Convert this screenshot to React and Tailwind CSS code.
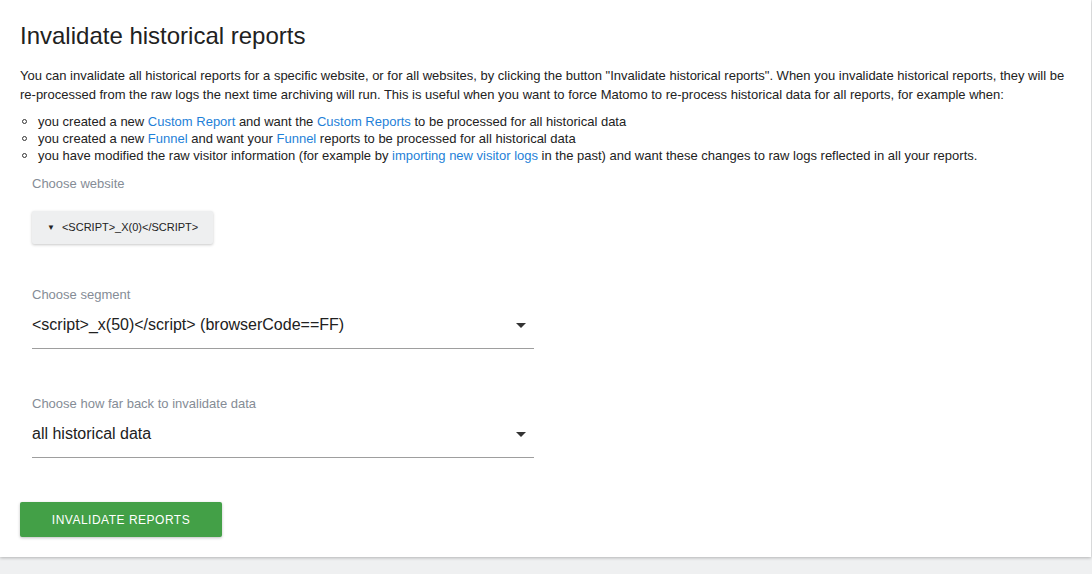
import React from 'react';

const linkCls = 'text-[#1e7fd8]';

function Bullet({ children }) {
  return (
    <li className="flex items-start">
      <span className="mt-[6px] ml-[2px] mr-[11px] h-[5px] w-[5px] shrink-0 rounded-full border border-[#333]"></span>
      <span>{children}</span>
    </li>
  );
}

function Caret() {
  return (
    <svg width="10" height="5" viewBox="0 0 10 5" className="shrink-0">
      <path d="M0 0 L10 0 L5 5 Z" fill="#333" />
    </svg>
  );
}

function FieldSelect({ label, value, labelMt }) {
  return (
    <div className={labelMt}>
      <div className="text-[13px] leading-[17px] text-[#858c96]">{label}</div>
      <div className="mt-[10px] flex w-[502px] items-center justify-between border-b border-[#9e9e9e] pb-[11px] pr-[8px]">
        <span className="text-[16px] leading-[24px] text-[#212121]">{value}</span>
        <Caret />
      </div>
    </div>
  );
}

export default function App() {
  return (
    <div className="min-h-[574px] bg-[#eff0f1] font-['Liberation_Sans',Arial,sans-serif]">
      <div className="mr-px bg-white px-5 pt-5 pb-5 shadow-[0_1px_3px_rgba(0,0,0,0.25)]">
        <h2 className="text-[24px] leading-8 text-[#212121]">Invalidate historical reports</h2>
        <p className="mt-[14px] text-[13px] leading-[19px] text-[#222]">
          You can invalidate all historical reports for a specific website, or for all websites, by clicking the button "Invalidate historical reports". When you invalidate historical reports, they will be re-processed from the raw logs the next time archiving will run. This is useful when you want to force Matomo to re-process historical data for all reports, for example when:
        </p>
        <ul className="mt-[9px] text-[13px] leading-[17px] text-[#222]">
          <Bullet>you created a new <span className={linkCls}>Custom Report</span> and want the <span className={linkCls}>Custom Reports</span> to be processed for all historical data</Bullet>
          <Bullet>you created a new <span className={linkCls}>Funnel</span> and want your <span className={linkCls}>Funnel</span> reports to be processed for all historical data</Bullet>
          <Bullet>you have modified the raw visitor information (for example by <span className={linkCls}>importing new visitor logs</span> in the past) and want these changes to raw logs reflected in all your reports.</Bullet>
        </ul>

        <div className="pl-3">
          <div className="mt-[11px] text-[13px] leading-[17px] text-[#858c96]">Choose website</div>
          <button className="mt-[19px] flex h-[33px] items-center gap-[7px] rounded-[2px] bg-[#eeeff0] pl-[15px] pr-[15px] text-[11px] uppercase text-[#222] shadow-[0_1px_3px_rgba(0,0,0,0.22)]">
            <span className="text-[8px]">▼</span>
            <span>&lt;SCRIPT&gt;_X(0)&lt;/SCRIPT&gt;</span>
          </button>

          <FieldSelect labelMt="mt-[42px]" label="Choose segment" value="<script>_x(50)</script> (browserCode==FF)" />
          <FieldSelect labelMt="mt-[46px]" label="Choose how far back to invalidate data" value="all historical data" />
        </div>

        <button className="mt-[44px] h-[35px] w-[202px] rounded-[2px] bg-[#43a047] text-[12px] uppercase tracking-[0.5px] text-white shadow-[0_1px_3px_rgba(0,0,0,0.25)]">
          Invalidate Reports
        </button>
      </div>
    </div>
  );
}
